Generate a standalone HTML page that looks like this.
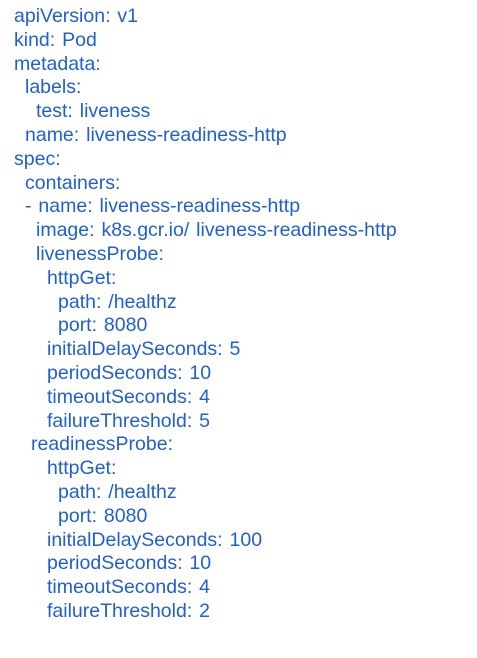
<!DOCTYPE html>
<html><head><style>
html,body{margin:0;padding:0;background:#fff;width:477px;height:658px;overflow:hidden}
.w{position:absolute;left:14px;top:5px;font-family:"Liberation Sans",Arial,sans-serif;font-size:19.5px;line-height:23.8px;color:#1f5fd6;word-spacing:1.5px}
.w div{height:23.8px;white-space:pre}
.a{padding-left:11px}.b{padding-left:22px}.c{padding-left:33px}.d{padding-left:44px}.r{padding-left:17px}
</style></head><body>
<div class="w"><div>apiVersion: v1</div><div>kind: Pod</div><div>metadata:</div><div class="a">labels:</div><div class="b">test: liveness</div><div class="a">name: liveness-readiness-http</div><div>spec:</div><div class="a">containers:</div><div class="a">- name: liveness-readiness-http</div><div class="b">image: k8s.gcr.io/ liveness-readiness-http</div><div class="b">livenessProbe:</div><div class="c">httpGet:</div><div class="d">path: /healthz</div><div class="d">port: 8080</div><div class="c">initialDelaySeconds: 5</div><div class="c">periodSeconds: 10</div><div class="c">timeoutSeconds: 4</div><div class="c">failureThreshold: 5</div><div class="r">readinessProbe:</div><div class="c">httpGet:</div><div class="d">path: /healthz</div><div class="d">port: 8080</div><div class="c">initialDelaySeconds: 100</div><div class="c">periodSeconds: 10</div><div class="c">timeoutSeconds: 4</div><div class="c">failureThreshold: 2</div></div>
</body></html>
